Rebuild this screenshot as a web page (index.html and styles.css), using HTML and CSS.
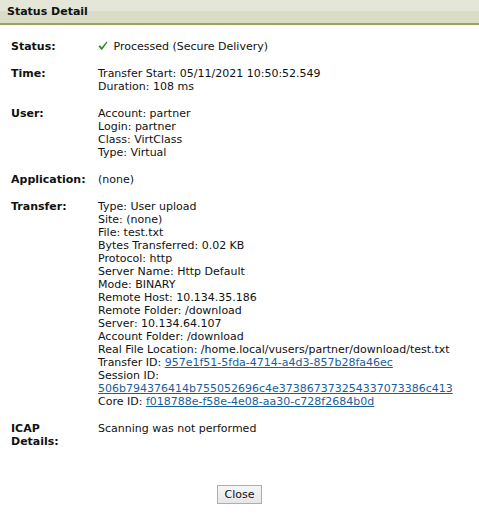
FILE: index.html
```html
<!DOCTYPE html>
<html>
<head>
<meta charset="utf-8">
<link rel="stylesheet" href="styles.css">
</head>
<body>
<div class="header">Status Detail</div>
<div class="details">
  <div class="row">
    <div class="label">Status:</div>
    <div class="value"><svg class="check" width="10" height="10" viewBox="0 0 10 10"><path d="M0.5 5.5 L2 4.3 L3.6 6.4 L8.6 0.6 L9.5 1.3 L3.8 9.2 Z" fill="#2f8a1c"/></svg> Processed (Secure Delivery)</div>
  </div>
  <div class="row">
    <div class="label">Time:</div>
    <div class="value">Transfer Start: 05/11/2021 10:50:52.549<br>Duration: 108 ms</div>
  </div>
  <div class="row">
    <div class="label">User:</div>
    <div class="value">Account: partner<br>Login: partner<br>Class: VirtClass<br>Type: Virtual</div>
  </div>
  <div class="row">
    <div class="label">Application:</div>
    <div class="value">(none)</div>
  </div>
  <div class="row">
    <div class="label">Transfer:</div>
    <div class="value">Type: User upload<br>Site: (none)<br>File: test.txt<br>Bytes Transferred: 0.02 KB<br>Protocol: http<br>Server Name: Http Default<br>Mode: BINARY<br>Remote Host: 10.134.35.186<br>Remote Folder: /download<br>Server: 10.134.64.107<br>Account Folder: /download<br>Real File Location: /home.local/vusers/partner/download/test.txt<br>Transfer ID: <a href="#">957e1f51-5fda-4714-a4d3-857b28fa46ec</a><br>Session ID:<br><a href="#">506b794376414b755052696c4e373867373254337073386c413</a><br>Core ID: <a href="#">f018788e-f58e-4e08-aa30-c728f2684b0d</a></div>
  </div>
  <div class="row">
    <div class="label">ICAP<br>Details:</div>
    <div class="value">Scanning was not performed</div>
  </div>
</div>
<div class="actions"><button class="btn">Close</button></div>
</body>
</html>
```
FILE: styles.css
```css
html, body {
  margin: 0;
  padding: 0;
  background: #fff;
}
body {
  font-family: "DejaVu Sans", sans-serif;
  font-size: 11px;
  line-height: 13px;
  color: #111;
}
.header {
  height: 23px;
  line-height: 23px;
  padding-left: 7px;
  font-weight: bold;
  font-size: 11px;
  background: linear-gradient(#e4e6d7 0, #e4e6d7 11px, #dadcc6 11px, #dadcc6 100%);
  border-bottom: 2px solid #9ba55a;
}
.details {
  padding: 15px 11px 0 11px;
}
.row {
  display: grid;
  grid-template-columns: 87px 1fr;
  margin-bottom: 14px;
}
.label {
  font-weight: bold;
}
.check {
  vertical-align: -1px;
  margin-right: 2px;
}
a {
  color: #1b5e9b;
  text-decoration: underline;
}
.actions {
  display: flex;
  justify-content: center;
  padding-top: 23px;
}
.btn {
  font-family: inherit;
  font-size: 11px;
  height: 19px;
  padding: 0 7px;
  border: 1px solid #adadad;
  background: linear-gradient(#f6f6f6, #e6e6e6);
  color: #111;
}
```
